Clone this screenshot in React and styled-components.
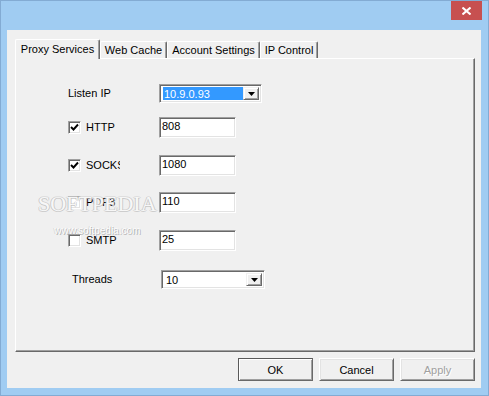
import React from "react";
import styled, { createGlobalStyle } from "styled-components";

const Global = createGlobalStyle`
  html, body { margin: 0; padding: 0; background: #ffffff; }
  body { font-family: "Liberation Sans", Arial, sans-serif; font-size: 11px; color: #000; }
  * { box-sizing: border-box; }
`;

const Window = styled.div`
  width: 489px;
  height: 396px;
  border: 1px solid #83abd3;
  background: #a0ccf2;
  display: flex;
  flex-direction: column;
`;

const TitleBar = styled.div`
  height: 29px;
  flex: none;
  display: flex;
  justify-content: flex-end;
  align-items: flex-start;
  padding-right: 6px;
`;

const CloseButton = styled.div`
  width: 31px;
  height: 19px;
  background: #c75050;
  display: flex;
  align-items: center;
  justify-content: center;
`;

const Client = styled.div`
  flex: 1;
  margin: 0 7px 7px 6px;
  background: #f0f0f0;
  padding: 9px 6px 7px 8px;
  display: flex;
  flex-direction: column;
`;

const TabStrip = styled.div`
  display: flex;
  align-items: flex-end;
  height: 20px;
  margin-bottom: -1px;
  position: relative;
  z-index: 1;
`;

const Tab = styled.div`
  width: ${(p) => p.$w}px;
  height: ${(p) => (p.$active ? 20 : 17)}px;
  margin-bottom: ${(p) => (p.$active ? 0 : 1)}px;
  background: #f0f0f0;
  border-top: 1px solid #ffffff;
  border-left: 1px solid #ffffff;
  border-right: 1px solid #696969;
  box-shadow: inset -1px 0 0 #a0a0a0;
  border-radius: 2px 2px 0 0;
  display: flex;
  align-items: center;
  justify-content: center;
  padding-bottom: ${(p) => (p.$active ? 2 : 0)}px;
  white-space: nowrap;
`;

const Panel = styled.div`
  position: relative;
  height: 294px;
  flex: none;
  border-top: 1px solid #ffffff;
  border-left: 1px solid #ffffff;
  border-right: 1px solid #696969;
  border-bottom: 1px solid #696969;
  box-shadow: inset -1px -1px 0 #a0a0a0;
  display: flex;
  flex-direction: column;
`;

const Row = styled.div`
  display: flex;
  align-items: center;
  height: 21px;
  margin-top: ${(p) => p.$gap}px;
  padding-left: 52px;
`;

const LabelCell = styled.div`
  width: 91px;
  flex: none;
  display: flex;
  align-items: center;
  padding-left: ${(p) => p.$indent || 0}px;
`;

const LabelText = styled.span`
  line-height: 13px;
  white-space: nowrap;
`;

const CheckText = styled.span`
  width: 34px;
  overflow: hidden;
  white-space: nowrap;
  line-height: 13px;
  margin-left: 5px;
`;

const CheckBox = styled.div`
  width: 13px;
  height: 13px;
  flex: none;
  background: #ffffff;
  border-top: 1px solid #a0a0a0;
  border-left: 1px solid #a0a0a0;
  border-right: 1px solid #ffffff;
  border-bottom: 1px solid #ffffff;
  box-shadow: inset 1px 1px 0 #696969, inset -1px -1px 0 #e3e3e3;
  display: flex;
  align-items: center;
  justify-content: center;
`;

const Edit = styled.div`
  width: 77px;
  height: 21px;
  background: #ffffff;
  border-top: 1px solid #a0a0a0;
  border-left: 1px solid #a0a0a0;
  border-right: 1px solid #ffffff;
  border-bottom: 1px solid #ffffff;
  box-shadow: inset 1px 1px 0 #696969, inset -1px -1px 0 #e3e3e3;
  padding: 2px 0 0 2px;
  line-height: 13px;
`;

const Combo = styled.div`
  width: ${(p) => p.$w}px;
  height: 19px;
  margin-left: ${(p) => p.$offset || 0}px;
  background: #ffffff;
  border-top: 1px solid #a0a0a0;
  border-left: 1px solid #a0a0a0;
  border-right: 1px solid #ffffff;
  border-bottom: 1px solid #ffffff;
  box-shadow: inset 1px 1px 0 #696969, inset -1px -1px 0 #e3e3e3;
  padding: 2px;
  display: flex;
`;

const ComboValue = styled.div`
  flex: 1;
  margin-left: 1px;
  padding-left: 1px;
  line-height: 15px;
  background: ${(p) => (p.$selected ? "#3399ff" : "transparent")};
  color: ${(p) => (p.$selected ? "#ffffff" : "#000000")};
`;

const DropButton = styled.div`
  width: 16px;
  flex: none;
  background: #f0f0f0;
  border-top: 1px solid #f0f0f0;
  border-left: 1px solid #f0f0f0;
  border-right: 1px solid #696969;
  border-bottom: 1px solid #696969;
  box-shadow: inset 1px 1px 0 #ffffff, inset -1px -1px 0 #a0a0a0;
  display: flex;
  align-items: center;
  justify-content: center;
`;

const ButtonRow = styled.div`
  display: flex;
  justify-content: flex-end;
  gap: 6px;
  margin-top: 6px;
`;

const Button = styled.div`
  width: 75px;
  height: 23px;
  display: flex;
  align-items: center;
  justify-content: center;
  background: #f0f0f0;
  color: ${(p) => (p.$disabled ? "#a0a0a0" : "#000")};
  border: 1px solid ${(p) => (p.$default ? "#5a5a5a" : "transparent")};
  border-top-color: ${(p) => (p.$default ? "#5a5a5a" : "#ffffff")};
  border-left-color: ${(p) => (p.$default ? "#5a5a5a" : "#ffffff")};
  border-right-color: #696969;
  border-bottom-color: #696969;
  box-shadow: ${(p) =>
    p.$default
      ? "inset 1px 1px 0 #ffffff, inset -1px -1px 0 #a0a0a0"
      : "inset 1px 1px 0 #e3e3e3, inset -1px -1px 0 #a0a0a0"};
  text-shadow: ${(p) => (p.$disabled ? "1px 1px 0 #ffffff" : "none")};
`;

const Watermark = styled.div`
  position: absolute;
  left: 22px;
  top: 133px;
  pointer-events: none;
  display: flex;
  flex-direction: column;
  align-items: center;
`;

const WatermarkBig = styled.div`
  font-family: "Liberation Serif", "Times New Roman", serif;
  font-size: 22px;
  line-height: 24px;
  color: rgba(255, 255, 255, 0.9);
  text-shadow: 1px 0 0 rgba(190, 190, 190, 0.7), -1px 0 0 rgba(190, 190, 190, 0.7),
    0 1px 0 rgba(190, 190, 190, 0.7), 0 -1px 0 rgba(210, 210, 210, 0.6);
`;

const WatermarkSmall = styled.div`
  font-family: "Liberation Sans", Arial, sans-serif;
  font-size: 10px;
  line-height: 12px;
  margin-top: 9px;
  color: rgba(255, 255, 255, 0.95);
  text-shadow: 1px 1px 0 rgba(170, 170, 170, 0.8), -1px 0 0 rgba(200, 200, 200, 0.6);
`;

const Check = () => (
  <svg width="9" height="9" viewBox="0 0 9 9">
    <polyline points="1,4 3.5,6.5 8,1.5" fill="none" stroke="#000" strokeWidth="1.9" />
  </svg>
);

const Arrow = () => (
  <svg width="7" height="4" viewBox="0 0 7 4">
    <polygon points="0,0 7,0 3.5,4" fill="#000" />
  </svg>
);

const CheckRow = ({ gap, checked, label, value }) => (
  <Row $gap={gap}>
    <LabelCell>
      <CheckBox>{checked && <Check />}</CheckBox>
      <CheckText>{label}</CheckText>
    </LabelCell>
    <Edit>{value}</Edit>
  </Row>
);

export default function App() {
  return (
    <>
      <Global />
      <Window>
        <TitleBar>
          <CloseButton>
            <svg width="9" height="8" viewBox="0 0 9 8">
              <path d="M0.5 0.5 L8.5 7.5 M8.5 0.5 L0.5 7.5" stroke="#fff" strokeWidth="2" />
            </svg>
          </CloseButton>
        </TitleBar>
        <Client>
          <TabStrip>
            <Tab $active $w={85}>Proxy Services</Tab>
            <Tab $w={67}>Web Cache</Tab>
            <Tab $w={93}>Account Settings</Tab>
            <Tab $w={58}>IP Control</Tab>
          </TabStrip>
          <Panel>
            <Row $gap={24}>
              <LabelCell>
                <LabelText>Listen IP</LabelText>
              </LabelCell>
              <Combo $w={103}>
                <ComboValue $selected>10.9.0.93</ComboValue>
                <DropButton>
                  <Arrow />
                </DropButton>
              </Combo>
            </Row>
            <CheckRow gap={13} checked label="HTTP" value="808" />
            <CheckRow gap={17} checked label="SOCKS" value="1080" />
            <CheckRow gap={16} label="POP3" value="110" />
            <CheckRow gap={17} label="SMTP" value="25" />
            <Row $gap={18}>
              <LabelCell $indent={4}>
                <LabelText>Threads</LabelText>
              </LabelCell>
              <Combo $w={104} $offset={2}>
                <ComboValue>10</ComboValue>
                <DropButton>
                  <Arrow />
                </DropButton>
              </Combo>
            </Row>
            <Watermark>
              <WatermarkBig>SOFTPEDIA</WatermarkBig>
              <WatermarkSmall>www.softpedia.com</WatermarkSmall>
            </Watermark>
          </Panel>
          <ButtonRow>
            <Button $default>OK</Button>
            <Button>Cancel</Button>
            <Button $disabled>Apply</Button>
          </ButtonRow>
        </Client>
      </Window>
    </>
  );
}
